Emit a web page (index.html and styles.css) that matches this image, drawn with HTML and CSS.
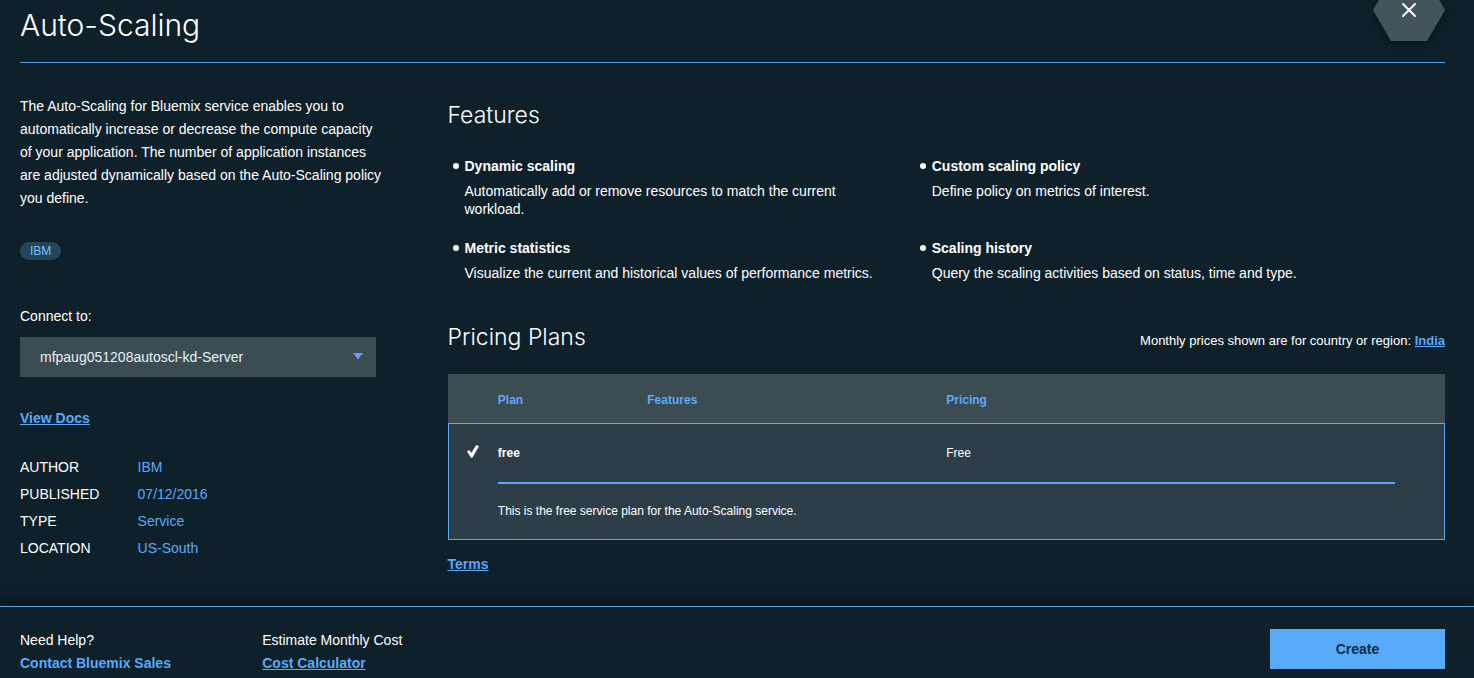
FILE: index.html
```html
<!DOCTYPE html>
<html lang="en">
<head>
<meta charset="utf-8">
<title>Auto-Scaling</title>
<link rel="stylesheet" href="styles.css">
</head>
<body>
<main class="page">
  <header class="page-header">
    <h1 class="title">Auto-Scaling</h1>
    <button class="close" type="button" aria-label="Close">
      <svg width="72" height="41" viewBox="0 0 72 41" aria-hidden="true">
        <path fill="#43545b" d="M0 10 18-21h36l18 31-18 31H18z"/>
        <path fill="none" stroke="#fff" stroke-width="2" stroke-linecap="round" d="m30 4 12 12m0-12L30 16"/>
      </svg>
    </button>
  </header>

  <div class="columns">
    <aside class="info">
      <p class="description">The Auto-Scaling for Bluemix service enables you to automatically increase or decrease the compute capacity of your application. The number of application instances are adjusted dynamically based on the Auto-Scaling policy you define.</p>
      <span class="tag">IBM</span>
      <label class="connect-label" for="connect">Connect to:</label>
      <div class="select-wrap">
        <select class="select" id="connect">
          <option>mfpaug051208autoscl-kd-Server</option>
        </select>
        <svg class="caret" width="10" height="7" viewBox="0 0 10 7" aria-hidden="true"><path fill="#6b9cff" d="M0 0h10L5 6.500z"/></svg>
      </div>
      <a class="link docs" href="#docs">View Docs</a>
      <dl class="meta">
        <dt>AUTHOR</dt><dd>IBM</dd>
        <dt>PUBLISHED</dt><dd>07/12/2016</dd>
        <dt>TYPE</dt><dd>Service</dd>
        <dt>LOCATION</dt><dd>US-South</dd>
      </dl>
    </aside>

    <section class="details">
      <h2 class="heading">Features</h2>
      <ul class="features">
        <li><h3>Dynamic scaling</h3><p>Automatically add or remove resources to match the current workload.</p></li>
        <li><h3>Custom scaling policy</h3><p>Define policy on metrics of interest.</p></li>
        <li><h3>Metric statistics</h3><p>Visualize the current and historical values of performance metrics.</p></li>
        <li><h3>Scaling history</h3><p>Query the scaling activities based on status, time and type.</p></li>
      </ul>

      <div class="pricing-head">
        <h2 class="heading">Pricing Plans</h2>
        <p class="region">Monthly prices shown are for country or region: <a class="link" href="#region">India</a></p>
      </div>
      <table class="plans">
        <colgroup>
          <col class="col-edge"><col class="col-plan"><col class="col-features"><col class="col-pricing"><col class="col-edge">
        </colgroup>
        <thead>
          <tr><td></td><th scope="col">Plan</th><th scope="col">Features</th><th scope="col">Pricing</th><td></td></tr>
        </thead>
        <tbody>
          <tr class="plan">
            <td class="check">
              <svg width="12" height="13" viewBox="0 0 12 13" role="img" aria-label="Selected"><path fill="#fff" d="M0 6.500 2.200 5l2.300 2.800L9.200 0 12 1.200 5.300 12.800H4z"/></svg>
            </td>
            <th scope="row">free</th><td class="ruled"></td><td class="ruled">Free</td><td></td>
          </tr>
          <tr class="plan-note">
            <td></td><td colspan="3">This is the free service plan for the Auto-Scaling service.</td><td></td>
          </tr>
        </tbody>
      </table>
      <a class="link" href="#terms">Terms</a>
    </section>
  </div>
</main>

<footer class="footer">
  <div class="help">
    <p>Need Help?</p>
    <a class="link plain" href="#sales">Contact Bluemix Sales</a>
  </div>
  <div class="help">
    <p>Estimate Monthly Cost</p>
    <a class="link" href="#calculator">Cost Calculator</a>
  </div>
  <button class="create" type="button">Create</button>
</footer>
</body>
</html>
```
FILE: styles.css
```css
* { box-sizing: border-box; }

body {
  margin: 0;
  min-height: 100vh;
  display: flex;
  flex-direction: column;
  background: #0e212b;
  color: #fff;
  font: 14px/18px "Helvetica Neue", "Liberation Sans", Arial, sans-serif;
}

h1, h2, h3, p, ul, dl, dd { margin: 0; padding: 0; }

.page { flex: 1; padding: 0 29px 0 20px; }

.page-header {
  position: relative;
  padding: 4px 0 16px;
  border-bottom: 1px solid #5f9fe0;
}

.title { font: 300 30px/42px Inter, sans-serif; }

.close {
  position: absolute;
  top: 0;
  right: 0;
  padding: 0;
  border: 0;
  background: none;
  cursor: pointer;
  filter: drop-shadow(0 2px 6px rgba(0, 0, 0, .4));
}
.close svg { display: block; }

.columns {
  display: grid;
  grid-template-columns: 25% 70%;
  justify-content: space-between;
}

.info { padding-top: 32px; }
.description { margin-right: -8px; line-height: 23px; }

.tag {
  display: inline-block;
  margin-top: 32px;
  padding: 0 10px;
  border-radius: 9px;
  background: #24455a;
  color: #7cc0ff;
  font-size: 12px;
  line-height: 18px;
}

.connect-label { display: block; margin-top: 47px; }

.select-wrap { position: relative; margin-top: 12px; }
.select {
  display: block;
  width: 100%;
  height: 40px;
  padding: 0 40px 0 20px;
  border: 0;
  border-radius: 0;
  appearance: none;
  background: #3c4c53;
  color: #e6f0f2;
  font: inherit;
}
.caret { position: absolute; top: 16px; right: 13px; pointer-events: none; }

.link { color: #5aaafa; font-weight: 700; text-decoration: underline; }
.plain { text-decoration: none; }
.docs { display: inline-block; margin-top: 32px; }

.meta {
  display: grid;
  grid-template-columns: 33% 1fr;
  margin-top: 27px;
  line-height: 27px;
}
.meta dd { color: #5aaafa; }

.details { padding-top: 36px; }
.heading { font: 300 23px/32px Inter, sans-serif; }

.features {
  display: grid;
  grid-template-columns: 1fr 1fr;
  row-gap: 21px;
  margin-top: 26px;
  padding: 0 46px 0 17px;
}
.features li {
  position: relative;
  padding-right: 40px;
  list-style: none;
}
.features li::before {
  content: "";
  position: absolute;
  top: 6px;
  left: -12px;
  width: 6px;
  height: 6px;
  border-radius: 50%;
  background: #fff;
}
.features h3 { margin-bottom: 7px; font-size: 14px; line-height: 18px; }

.pricing-head {
  display: flex;
  justify-content: space-between;
  align-items: center;
  margin: 39px 0 21px;
}
.region { padding-top: 8px; font-size: 13px; }

.plans {
  width: 100%;
  table-layout: fixed;
  border-collapse: collapse;
  margin-bottom: 15px;
  font-size: 12px;
  text-align: left;
}
.plans th, .plans td { padding: 0; }
.col-edge { width: 5%; }
.col-plan { width: 15%; }
.col-features { width: 30%; }
.col-pricing { width: 45%; }
.plans thead { height: 49px; background: #3c4c53; color: #5aaafa; }
.plans thead th { padding-top: 3px; }
.plans tbody { border: 1px solid #5aaafa; background: #2d3e48; }
.plan { height: 60px; }
.plan th, .ruled { border-bottom: 2px solid #5aaafa; }
.plans .check { padding-bottom: 4px; }
.check svg { display: block; margin: 0 auto; }
.plan-note { height: 56px; }

.footer {
  display: flex;
  align-items: flex-start;
  padding: 22px 29px 3px 20px;
  border-top: 1px solid #5f9fe0;
  background: #0e212b;
  box-shadow: 0 -3px 14px rgba(0, 0, 0, .6);
}
.help { width: 17%; line-height: 23px; }
.create {
  width: 175px;
  height: 40px;
  margin-left: auto;
  border: 0;
  background: #5aaafa;
  color: #0e2c3f;
  font: 700 14px/18px "Helvetica Neue", "Liberation Sans", Arial, sans-serif;
  cursor: pointer;
}
```
